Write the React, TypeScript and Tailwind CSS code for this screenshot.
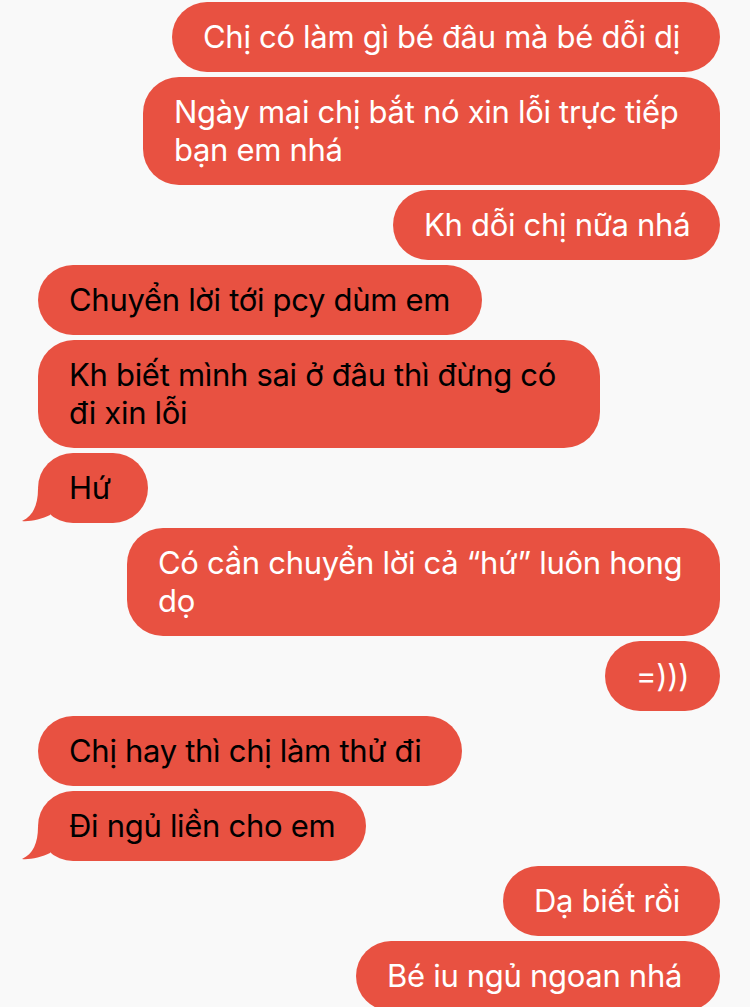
import React from 'react';

type Msg = {
    side: 'left' | 'right';
    lines: string[];
    width: string;
    tail?: boolean;
};

const messages: Msg[] = [
    { side: 'right', lines: ['Chị có làm gì bé đâu mà bé dỗi dị'], width: 'w-[548px]' },
    { side: 'right', lines: ['Ngày mai chị bắt nó xin lỗi trực tiếp', 'bạn em nhá'], width: 'w-[577px]' },
    { side: 'right', lines: ['Kh dỗi chị nữa nhá'], width: 'w-[327px]' },
    { side: 'left', lines: ['Chuyển lời tới pcy dùm em'], width: 'w-[444px]' },
    { side: 'left', lines: ['Kh biết mình sai ở đâu thì đừng có', 'đi xin lỗi'], width: 'w-[562px]' },
    { side: 'left', lines: ['Hứ'], width: 'w-[110px]', tail: true },
    { side: 'right', lines: ['Có cần chuyển lời cả “hứ” luôn hong', 'dọ'], width: 'w-[593px]' },
    { side: 'right', lines: ['=)))'], width: 'w-[115px]' },
    { side: 'left', lines: ['Chị hay thì chị làm thử đi'], width: 'w-[424px]' },
    { side: 'left', lines: ['Đi ngủ liền cho em'], width: 'w-[328px]', tail: true },
    { side: 'right', lines: ['Dạ biết rồi'], width: 'w-[217px]' },
    { side: 'right', lines: ['Bé iu ngủ ngoan nhá'], width: 'w-[364px]' },
];

// little curled tail under the last bubble of a left-hand group
const Tail = () => (
    <svg
        className="absolute left-[-18px] bottom-0 w-[40px] h-[36px]"
        viewBox="0 0 40 36"
        fill="#e85141"
    >
        <path d="M18 2 C18 18 13 29 2 34 C9 35 22 32 30 28 L30 2 Z" />
    </svg>
);

const Bubble = ({ msg }: { msg: Msg }) => {
    const isLeft = msg.side === 'left';
    return (
        <div className={`flex ${isLeft ? 'justify-start' : 'justify-end'}`}>
            <div
                className={`relative ${msg.width} rounded-[36px] bg-[#e85141] py-4 pl-[31px] pr-[20px] text-[31px] leading-[38px] tracking-[-0.3px] whitespace-nowrap ${
                    isLeft ? 'text-black' : 'text-white'
                }`}
            >
                {msg.tail && <Tail />}
                {msg.lines.map((line, i) => (
                    <div key={i} className="relative">
                        {line}
                    </div>
                ))}
            </div>
        </div>
    );
};

export default function App() {
    return (
        <div
            className="w-[750px] h-[1007px] overflow-hidden bg-[#f9f9f9] pt-[2px] pl-[38px] pr-[30px]"
            style={{ fontFamily: 'Inter, "Noto Sans", sans-serif' }}
        >
            <div className="flex flex-col gap-[5px]">
                {messages.map((m, i) => (
                    <Bubble key={i} msg={m} />
                ))}
            </div>
        </div>
    );
}
